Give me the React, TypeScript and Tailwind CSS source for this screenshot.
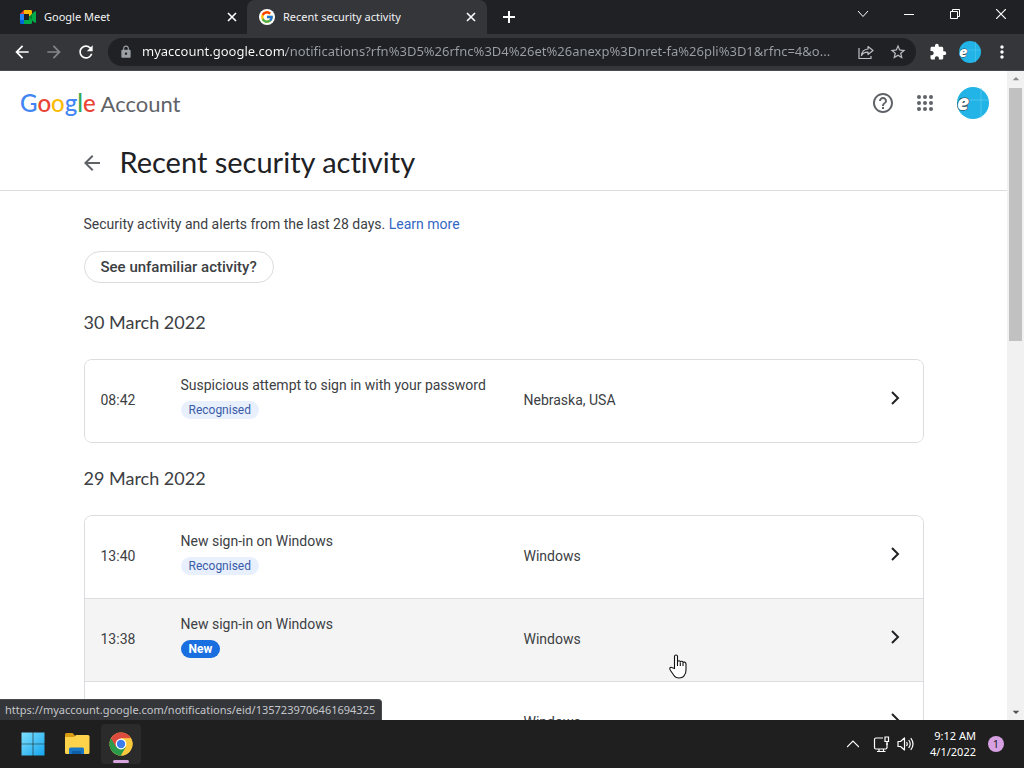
import { useState } from "react";
import type { ReactNode } from "react";
import { FcGoogle } from "react-icons/fc";
import {
  MdArrowBack,
  MdArrowDropDown,
  MdArrowDropUp,
  MdArrowForward,
  MdExtension,
  MdHelpOutline,
  MdLock,
  MdMoreVert,
  MdRefresh,
  MdStarBorder,
} from "react-icons/md";

type Activity = {
  id: string;
  time: string;
  title: string;
  status: "Recognised" | "New";
  place: string;
  active?: boolean;
};

type ActivityGroup = {
  date: string;
  items: Activity[];
};

const groups: ActivityGroup[] = [
  {
    date: "30 March 2022",
    items: [
      {
        id: "1",
        time: "08:42",
        title: "Suspicious attempt to sign in with your password",
        status: "Recognised",
        place: "Nebraska, USA",
      },
    ],
  },
  {
    date: "29 March 2022",
    items: [
      { id: "2", time: "13:40", title: "New sign-in on Windows", status: "Recognised", place: "Windows" },
      { id: "3", time: "13:38", title: "New sign-in on Windows", status: "New", place: "Windows", active: true },
      { id: "4", time: "13:36", title: "New sign-in on Windows", status: "Recognised", place: "Windows" },
    ],
  },
];

function MeetLogo() {
  return (
    <svg viewBox="0 0 16 14" className="h-3.5 w-4">
      <path d="M0 4 4 0v4z" fill="#ea4335" />
      <path d="M0 4h4v6H0z" fill="#2684fc" />
      <path d="M0 10h4v4H1.300Q0 14 0 12.700z" fill="#0066da" />
      <path d="M4 0h6.700Q12 0 12 1.300V6L9 7V4H4z" fill="#ffba00" />
      <path d="M4 10h5V7l3 2.500v3.200q0 1.300-1.300 1.300H4z" fill="#00ac47" />
      <path d="M9 7l5.500-5.500Q16 .6 16 2v10q0 1.400-1.500.5L9 8z" fill="#00ac47" />
      <path d="M9 7l3-3v6z" fill="#00832d" />
    </svg>
  );
}

function ChromeLogo() {
  return (
    <svg viewBox="0 0 48 48" className="size-6">
      <circle cx="24" cy="24" r="23" fill="#fbc93c" />
      <path d="M24 24 4.080 12.500A23 23 0 0 0 24 47l9.960-17.250z" fill="#2a9a4b" />
      <path d="M43.920 12.500A23 23 0 0 0 4.080 12.500L14.040 29.750 24 13h19.920z" fill="#dd4b3e" />
      <path d="M43.920 12.500H24v11.500l9.960 5.750L24 47a23 23 0 0 0 19.920-34.500z" fill="#fbc93c" />
      <circle cx="24" cy="24" r="10.800" fill="#fff" />
      <circle cx="24" cy="24" r="8.400" fill="#3b7ded" />
    </svg>
  );
}

function FolderLogo() {
  return (
    <svg viewBox="0 0 26 24" className="h-6 w-[26px]">
      <path d="M1 2.500Q1 1 2.500 1h6L11 3.500V8H1z" fill="#d89b12" />
      <path d="M1 5h9l2-2h12q1.500 0 1.500 1.500v16q0 1.500-1.500 1.500H2.500Q1 22 1 20.500z" fill="#fcd34a" />
      <path d="M5 22v-5q0-1.500 1.500-1.500h12q1.500 0 1.500 1.500v5z" fill="#1976c5" />
      <path d="M8 22v-3h9v3z" fill="#0f5ea8" />
    </svg>
  );
}

function WindowsLogo() {
  return (
    <svg viewBox="0 0 24 24" className="size-6">
      <defs>
        <linearGradient id="win" x1="0" y1="0" x2="1" y2="1">
          <stop offset="0" stopColor="#7fe0fb" />
          <stop offset="1" stopColor="#14a5ef" />
        </linearGradient>
      </defs>
      <path d="M.5.5h11.200v11.200H.5zM12.300.5h11.200v11.200H12.300zM.5 12.300h11.200v11.200H.5zM12.300 12.300h11.200v11.200H12.300z" fill="url(#win)" />
    </svg>
  );
}

function Avatar({ className }: { className: string }) {
  return (
    <svg viewBox="0 0 32 32" className={className}>
      <circle cx="16" cy="16" r="16" fill="#22b4e6" />
      <path d="M12 13h20M24 1v30" stroke="#5fcbf0" strokeWidth=".7" />
      <text x="0" y="23" fontSize="21" fontWeight="800" fontStyle="italic" fontFamily="Open Sans, sans-serif" fill="#fff" stroke="#2b3a42" strokeWidth="1.200" paintOrder="stroke">
        e
      </text>
    </svg>
  );
}

function ShareIcon() {
  return (
    <svg viewBox="0 0 16 16" className="size-4" fill="none" stroke="currentColor" strokeWidth="1.200" strokeLinejoin="round">
      <path d="M1 4v10.500h12V12" />
      <path d="M10 2.500 15 6.500l-5 4V8.200Q5.500 8 3.500 11.500 4 5.500 10 5z" />
    </svg>
  );
}

function AppsIcon() {
  const dots = [4, 10, 16];
  return (
    <svg viewBox="0 0 20 20" className="size-5" fill="#5f6368">
      {dots.map((y) => dots.map((x) => <circle key={`${x}-${y}`} cx={x} cy={y} r="2" />))}
    </svg>
  );
}

function CloseIcon() {
  return (
    <svg viewBox="0 0 10 10" className="size-2.5" stroke="currentColor" strokeWidth="1.600">
      <path d="M1 1l8 8M9 1l-8 8" />
    </svg>
  );
}

function ChevronIcon() {
  return (
    <svg viewBox="0 0 24 24" className="size-6" fill="none" stroke="#202124" strokeWidth="2">
      <path d="M9 6l6 6-6 6" />
    </svg>
  );
}

function HandCursor() {
  return (
    <svg viewBox="0 0 18 25" className="pointer-events-none absolute left-[669px] top-[583px] h-[25px] w-[18px]">
      <path
        d="M5.500 14.500V2.500Q5.500 1 7 1t1.500 1.500V8q0-1.200 1.400-1.200T11.300 8.200q.1-1.100 1.400-1T14 8.800q.2-.9 1.500-.7T17 9.800V16q0 3-1.500 5-1.500 3-5.500 3-3.500 0-5-2.500L1.500 16.500Q.2 14.500 1.300 13.500q1-.6 2.200.2z"
        fill="#fff"
        stroke="#111"
        strokeWidth="1.100"
      />
      <path d="M8.500 8v4M11.300 8.500V12M14 9v3" stroke="#111" strokeWidth="1.100" />
    </svg>
  );
}

function Tab({ icon, title, active }: { icon: ReactNode; title: string; active?: boolean }) {
  return (
    <div
      className={
        active
          ? "flex w-60 items-center rounded-t-lg bg-[#35363a] pl-3 pr-2.5"
          : "flex w-[247px] items-center pl-5 pr-[9px]"
      }
    >
      <button className="flex min-w-0 flex-1 items-center gap-2 text-left text-[11px] text-[#f1f3f4]">
        {icon}
        <span className="truncate">{title}</span>
      </button>
      <button aria-label={`Close ${title}`} className="p-px text-white">
        <CloseIcon />
      </button>
    </div>
  );
}

function TabStrip() {
  return (
    <div className="flex h-[34px] shrink-0 bg-[#202124]">
      <Tab icon={<MeetLogo />} title="Google Meet" />
      <Tab
        active
        icon={
          <span className="flex size-4 items-center justify-center rounded-full bg-white">
            <FcGoogle className="size-3.5" />
          </span>
        }
        title="Recent security activity"
      />
      <button aria-label="New tab" className="flex w-11 items-center justify-center text-white">
        <svg viewBox="0 0 12 12" className="size-3" stroke="currentColor" strokeWidth="2">
          <path d="M6 0v12M0 6h12" />
        </svg>
      </button>
      <div className="ml-auto flex h-7 text-white">
        <button aria-label="Search tabs" className="flex w-[46px] items-center justify-center">
          <svg viewBox="0 0 12 12" className="size-3" fill="none" stroke="currentColor">
            <path d="M1 3l5 5.500L11 3" />
          </svg>
        </button>
        <button aria-label="Minimise" className="flex w-[46px] items-center justify-center">
          <svg viewBox="0 0 10 10" className="size-2.5" stroke="currentColor">
            <path d="M0 5.500h10" />
          </svg>
        </button>
        <button aria-label="Restore" className="flex w-[46px] items-center justify-center">
          <svg viewBox="0 0 10 10" className="size-2.5" fill="none" stroke="currentColor">
            <path d="M.5 2.500h7v7h-7zM2.500 2.500v-2h7v7h-2" />
          </svg>
        </button>
        <button aria-label="Close" className="flex w-[46px] items-center justify-center">
          <svg viewBox="0 0 10 10" className="size-2.5" stroke="currentColor" strokeWidth="1.200">
            <path d="M0 0l10 10M10 0L0 10" />
          </svg>
        </button>
      </div>
    </div>
  );
}

function Toolbar() {
  const [url, setUrl] = useState(
    "myaccount.google.com/notifications?rfn%3D5%26rfnc%3D4%26et%26anexp%3Dnret-fa%26pli%3D1&rfnc=4&o..."
  );

  return (
    <div className="flex h-[37px] shrink-0 items-center border-b border-[#4a4b4e] bg-[#35363a] px-1.5 text-white">
      <button aria-label="Back" className="flex w-8 justify-center">
        <MdArrowBack className="size-5" />
      </button>
      <button aria-label="Forward" className="flex w-8 justify-center text-[#85868a]">
        <MdArrowForward className="size-5" />
      </button>
      <button aria-label="Reload" className="flex w-8 justify-center">
        <MdRefresh className="size-5" />
      </button>
      <div className="mx-1.5 flex h-7 min-w-0 flex-1 items-center rounded-full bg-[#202124] pl-[11px] pr-0.5 text-[#bdc1c6]">
        <MdLock className="size-3.5 shrink-0 text-[#9aa0a6]" />
        {/* the host is brighter than the path */}
        <input
          aria-label="Address"
          value={url}
          onChange={(e) => setUrl(e.target.value)}
          className="ml-[9px] min-w-0 flex-1 bg-linear-to-r from-white from-[144px] to-[#9aa0a6] to-[144px] bg-clip-text text-[13px] text-transparent caret-white outline-none"
        />
        <button aria-label="Share" className="flex w-8 justify-center">
          <ShareIcon />
        </button>
        <button aria-label="Bookmark" className="flex w-8 justify-center">
          <MdStarBorder className="size-[18px]" />
        </button>
      </div>
      <button aria-label="Extensions" className="flex w-8 justify-center">
        <MdExtension className="size-[18px]" />
      </button>
      <button aria-label="Profile" className="flex w-8 justify-center">
        <Avatar className="size-[22px]" />
      </button>
      <button aria-label="Menu" className="flex w-8 justify-center">
        <MdMoreVert className="size-5" />
      </button>
    </div>
  );
}

function ActivityRow({ item }: { item: Activity }) {
  return (
    <li className="border-b border-[#dadce0] last:border-b-0">
      <a
        href={`#${item.id}`}
        className={`grid h-[82px] grid-cols-[80px_343px_1fr_24px] items-center px-4 pb-0.5 text-sm text-[#3c4043] hover:bg-[#f4f4f4] ${
          item.active ? "bg-[#f4f4f4]" : "bg-white"
        }`}
      >
        <span>{item.time}</span>
        <span className="flex flex-col items-start gap-1.5 pb-1.5">
          <span className="leading-5">{item.title}</span>
          <span
            className={
              item.status === "New"
                ? "rounded-full bg-[#1a6fe0] px-2 text-xs leading-[18px] font-bold text-white"
                : "rounded-full bg-[#e8f0fe] px-2 text-xs leading-[18px] text-[#3a5ba8]"
            }
          >
            {item.status}
          </span>
        </span>
        <span>{item.place}</span>
        <span className="pb-1">
          <ChevronIcon />
        </span>
      </a>
    </li>
  );
}

function Page() {
  return (
    <div className="min-w-0 flex-1 overflow-hidden bg-white font-['Roboto',sans-serif]">
      <header className="flex h-16 items-center pl-5 pr-[18px]">
        <a href="#account" className="font-['Lato',sans-serif] text-[22px] text-[#5f6368]">
          <span className="text-2xl font-medium">
            <span className="text-[#4285f4]">G</span>
            <span className="text-[#ea4335]">o</span>
            <span className="text-[#fbbc05]">o</span>
            <span className="text-[#4285f4]">g</span>
            <span className="text-[#34a853]">l</span>
            <span className="text-[#ea4335]">e</span>
          </span>{" "}
          Account
        </a>
        <div className="ml-auto flex items-center">
          <button aria-label="Help" className="text-[#5f6368]">
            <MdHelpOutline className="size-6" />
          </button>
          <button aria-label="Google apps" className="ml-5">
            <AppsIcon />
          </button>
          <button aria-label="Account" className="ml-[22px]">
            <Avatar className="size-8" />
          </button>
        </div>
      </header>
      <div className="border-b border-[#dadce0]">
        <div className="mx-auto flex h-[55px] max-w-[840px] items-center gap-4">
          <button aria-label="Back" className="-ml-1 flex w-6 justify-center text-[#5f6368]">
            <MdArrowBack className="size-6" />
          </button>
          <h1 className="pb-0.5 font-['Lato',sans-serif] text-[29px] text-[#202124] [font-variant-ligatures:none]">
            Recent security activity
          </h1>
        </div>
      </div>
      <main className="mx-auto max-w-[840px] pt-6">
        <p className="mb-[18px] text-sm leading-[18px] text-[#3c4043]">
          Security activity and alerts from the last 28 days.{" "}
          <a href="#learn" className="text-[#3367c4]">
            Learn more
          </a>
        </p>
        <button className="mb-1 h-8 rounded-full border border-[#dadce0] px-4 text-[15px] font-medium text-[#3c4043]">
          See unfamiliar activity?
        </button>
        {groups.map((group) => (
          <section key={group.date}>
            <h2 className="flex h-[72px] items-center pb-0.5 font-['Lato',sans-serif] text-lg text-[#3c4043]">{group.date}</h2>
            <ul className="overflow-hidden rounded-lg border border-[#dadce0]">
              {group.items.map((item) => (
                <ActivityRow key={item.id} item={item} />
              ))}
            </ul>
          </section>
        ))}
      </main>
    </div>
  );
}

function Scrollbar() {
  return (
    <div className="flex w-[17px] shrink-0 flex-col items-center bg-[#f1f1f1]">
      <MdArrowDropUp className="size-4 text-[#8a8a8a]" />
      <div className="mt-px h-[39%] w-[13px] bg-[#c1c1c1]" />
      <MdArrowDropDown className="mt-auto size-4 text-[#505050]" />
    </div>
  );
}

function Taskbar() {
  return (
    <footer className="flex h-12 shrink-0 items-center bg-[#1f1f1f] pl-[13px] pr-5 text-white">
      <div className="flex gap-1">
        <button aria-label="Start" className="flex size-10 items-center justify-center">
          <WindowsLogo />
        </button>
        <button aria-label="File Explorer" className="flex size-10 items-center justify-center">
          <FolderLogo />
        </button>
        <button aria-label="Chrome" className="relative flex size-10 items-center justify-center rounded bg-[#2b2b2b]">
          <ChromeLogo />
          <span className="absolute bottom-px h-[3px] w-4 rounded-full bg-[#d6a5dd]" />
        </button>
      </div>
      <div className="ml-auto flex items-center">
        <button aria-label="Show hidden icons">
          <svg viewBox="0 0 12 12" className="size-3" fill="none" stroke="currentColor" strokeWidth="1.200">
            <path d="M0 9l6-6 6 6" />
          </svg>
        </button>
        <button aria-label="Network" className="ml-3.5">
          <svg viewBox="0 0 17 17" className="size-[17px]" fill="none" stroke="currentColor" strokeWidth="1.200">
            <path d="M10 2H3Q1.500 2 1.500 3.500v8Q1.500 13 3 13h9.500q1.500 0 1.500-1.500V7M4 15.500h8.500M6 13v2.500M10.500 13v2.500" />
            <path d="M12 1h3.500v4.500H12zM14 5.500V9" />
          </svg>
        </button>
        <button aria-label="Volume" className="ml-[7px]">
          <svg viewBox="0 0 17 16" className="h-4 w-[17px]" fill="none" stroke="currentColor" strokeWidth="1.200" strokeLinejoin="round">
            <path d="M1 5.500h2.500L7.500 2v12l-4-3.500H1z" />
            <path d="M9.500 6q1.500 2 0 4M11.700 4q3 4 0 8M13.800 2.200q4.400 5.800 0 11.600" />
          </svg>
        </button>
        <div className="ml-4 text-right text-[11px] leading-4">
          <div>9:12 AM</div>
          <div>4/1/2022</div>
        </div>
        <span className="ml-3 flex size-4 items-center justify-center rounded-full bg-[#d6a0e2] text-[11px] text-[#222]">1</span>
      </div>
    </footer>
  );
}

export default function App() {
  return (
    <div className="flex h-screen flex-col overflow-hidden font-['Noto_Sans','Open_Sans',sans-serif]">
      <TabStrip />
      <Toolbar />
      <div className="relative flex min-h-0 flex-1">
        <Page />
        <Scrollbar />
        <HandCursor />
        <div className="absolute bottom-0 left-0 rounded-tr border-t border-r border-[#4a4b4e] bg-[#35363a] pr-1.5 pl-[5px] text-[11px] leading-5 text-[#c4c7cb]">
          https://myaccount.google.com/notifications/eid/1357239706461694325
        </div>
      </div>
      <Taskbar />
    </div>
  );
}
